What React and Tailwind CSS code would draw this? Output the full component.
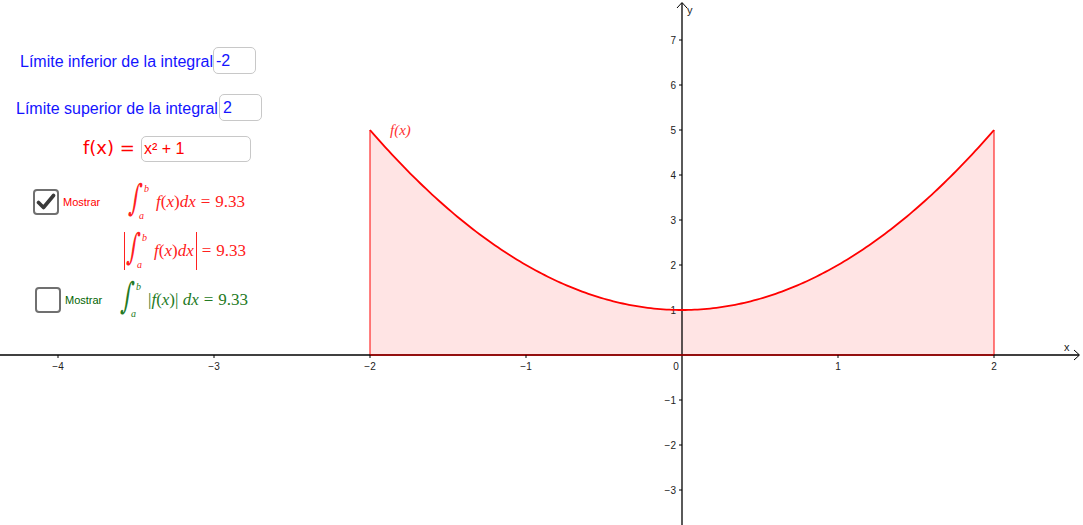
import React from 'react';

const OX = 682;
const OY = 355;
const SX = 156;
const SY = 45;

const px = (x) => OX + SX * x;
const py = (y) => OY - SY * y;

const f = (x) => x * x + 1;

const curvePoints = () => {
  const pts = [];
  for (let i = 0; i <= 200; i++) {
    const x = -2 + (4 * i) / 200;
    pts.push(`${px(x).toFixed(2)},${py(f(x)).toFixed(2)}`);
  }
  return pts;
};

const SERIF = { fontFamily: '"Liberation Serif", "DejaVu Serif", serif' };

const Graph = () => {
  const pts = curvePoints();
  const area = `M${px(-2)},${OY} L${pts.join(' L')} L${px(2)},${OY} Z`;
  const xTicks = [-4, -3, -2, -1, 1, 2];
  const yTicks = [7, 6, 5, 4, 3, 2, 1, -1, -2, -3];
  const lbl = (n) => (n < 0 ? `\u2212${-n}` : `${n}`);

  return (
    <svg width="1083" height="525" className="absolute inset-0" style={{ fontFamily: '"Liberation Sans", Arial, sans-serif' }}>
      {/* area under curve */}
      <path d={area} fill="#ffe4e4" stroke="none" />
      <line x1={px(-2)} y1={OY} x2={px(-2)} y2={py(5)} stroke="#ff0000" strokeWidth="1" />
      <line x1={px(2)} y1={OY} x2={px(2)} y2={py(5)} stroke="#ff0000" strokeWidth="1" />

      {/* axes */}
      <line x1="0" y1={OY} x2="1079" y2={OY} stroke="#000" strokeWidth="1.3" />
      <path d="M1074,350 L1079.5,355 L1074,360" fill="none" stroke="#000" strokeWidth="1" />
      <line x1={OX} y1="3" x2={OX} y2="525" stroke="#000" strokeWidth="1.3" />
      <path d="M677,8 L682,2.5 L687,8" fill="none" stroke="#000" strokeWidth="1" />
      <line x1={px(-2)} y1={OY} x2={px(2)} y2={OY} stroke="#b00000" strokeWidth="1.3" />

      {xTicks.map((n) => (
        <g key={`x${n}`}>
          <line x1={px(n)} y1={OY} x2={px(n)} y2={OY + 3} stroke="#000" strokeWidth="1" />
          <text x={px(n)} y={OY + 15} fontSize="10" fill="#222" textAnchor="middle">{lbl(n)}</text>
        </g>
      ))}
      <text x={OX - 6} y={OY + 15} fontSize="10" fill="#222" textAnchor="middle">0</text>

      {yTicks.map((n) => (
        <g key={`y${n}`}>
          <line x1={OX - 3} y1={py(n)} x2={OX} y2={py(n)} stroke="#000" strokeWidth="1" />
          <text x={OX - 6} y={py(n) + 4} fontSize="10" fill="#222" textAnchor="end">{lbl(n)}</text>
        </g>
      ))}

      <text x="1064" y="351" fontSize="11" fill="#222">x</text>
      <text x="687" y="14" fontSize="11" fill="#222">y</text>

      {/* curve */}
      <polyline points={pts.join(' ')} fill="none" stroke="#ff0000" strokeWidth="1.8" />
      <text x="390" y="135" fontSize="15" fill="#ff3030" fontStyle="italic" style={SERIF}>f(x)</text>
    </svg>
  );
};

const Integral = ({ color, abs, children }) => (
  <div className="flex items-center h-[38px] text-[17px]" style={{ color, ...SERIF }}>
    {abs && <span className="w-px h-[38px] mr-[2px]" style={{ background: color }} />}
    <span className="relative inline-block w-[22px] h-[38px] shrink-0">
      <span
        className="absolute left-[1px] top-[-3px] text-[36px] leading-none origin-left"
        style={{ fontFamily: '"DejaVu Serif", serif', transform: 'scaleX(0.6) skewX(-12deg)' }}
      >
        ∫
      </span>
      <span className="absolute left-[15px] top-[1px] text-[10px] italic leading-none">b</span>
      <span className="absolute left-[10px] top-[28px] text-[10px] italic leading-none">a</span>
    </span>
    <span className="ml-[5px] whitespace-pre">{children}</span>
    {abs && <span className="w-px h-[38px] ml-[2px]" style={{ background: color }} />}
    <span className="ml-[5px]">=</span>
    <span className="ml-[5px]">9.33</span>
  </div>
);

const Box = ({ className, children, color }) => (
  <div className={`border border-[#c8c8c8] rounded-[5px] bg-white flex items-center text-[16px] leading-none shrink-0 ${className}`} style={{ color }}>
    {children}
  </div>
);

const Checkbox = ({ checked }) => (
  <div className="w-[26px] h-[26px] border-2 border-[#707070] rounded-[4px] bg-white flex items-center justify-center shrink-0">
    {checked && (
      <svg width="20" height="18" viewBox="0 0 20 18">
        <path d="M2.5,9.5 L7.5,14.5 L17.5,2.5" fill="none" stroke="#3a3a3a" strokeWidth="3.6" strokeLinecap="round" strokeLinejoin="round" />
      </svg>
    )}
  </div>
);

const Panel = () => (
  <div className="absolute left-0 top-[47px] flex flex-col text-[16px]">
    <div className="flex items-center h-[27px] pl-[20px] text-[#1414ff]">
      <span className="pt-[3px] whitespace-nowrap">Límite inferior de la integral</span>
      <Box className="w-[43px] h-[27px] pl-[2px]" color="#1414ff">-2</Box>
    </div>

    <div className="flex items-center h-[27px] mt-[20px] pl-[16px] text-[#1414ff]">
      <span className="pt-[3px] pr-[1px] whitespace-nowrap">Límite superior de la integral</span>
      <Box className="w-[43px] h-[27px] pl-[3px]" color="#1414ff">2</Box>
    </div>

    <div className="flex items-center h-[26px] mt-[15px] pl-[83px] text-[#ff0000]">
      <span className="text-[18px] leading-none w-[58px] pb-[2px] whitespace-nowrap" style={{ fontFamily: '"DejaVu Sans", sans-serif' }}>f(x) =</span>
      <Box className="w-[110px] h-[26px] pl-[2px]" color="#ff0000">x² + 1</Box>
    </div>

    <div className="flex items-center h-[38px] mt-[21px] pl-[33px]">
      <Checkbox checked />
      <span className="ml-[4px] w-[66px] text-[11px] text-[#ff0000]">Mostrar</span>
      <Integral color="#ff2020">
        <i>f</i>(<i>x</i>)<i>dx</i>
      </Integral>
    </div>

    <div className="flex items-center h-[38px] mt-[11px] pl-[124px]">
      <Integral color="#ff2020" abs>
        <i>f</i>(<i>x</i>)<i>dx</i>
      </Integral>
    </div>

    <div className="flex items-center h-[38px] mt-[11px] pl-[35px]">
      <Checkbox />
      <span className="ml-[4px] w-[56px] text-[11px] text-[#006400]">Mostrar</span>
      <Integral color="#247a24">
        |<i>f</i>(<i>x</i>)| <i>dx</i>
      </Integral>
    </div>
  </div>
);

export default function App() {
  return (
    <div className="relative w-[1083px] h-[525px] bg-white overflow-hidden" style={{ fontFamily: '"Liberation Sans", Arial, sans-serif' }}>
      <Graph />
      <Panel />
    </div>
  );
}
